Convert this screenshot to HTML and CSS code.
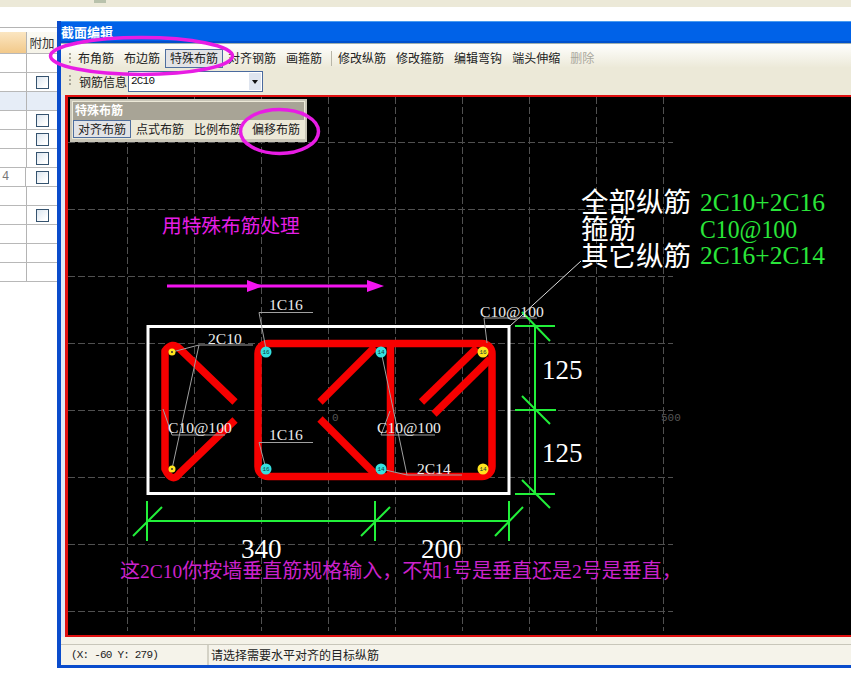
FILE: index.html
```html
<!DOCTYPE html>
<html lang="zh-CN">
<head>
<meta charset="utf-8">
<title>截面编辑</title>
<link rel="stylesheet" href="styles.css">
</head>
<body>
<div class="page">
  <div class="strip"><span class="strip-mark"></span></div>
  <div class="gap"></div>
  <div class="main">
    <div class="sheet">
      <div class="sheet-top"></div>
      <div class="row head"><div class="c1 orange"></div><div class="c2">附加</div></div>
      <div class="row"><div class="c1"></div><div class="c2"></div></div>
      <div class="row"><div class="c1"></div><div class="c2"><i class="cb"></i></div></div>
      <div class="row sel"><div class="c1"></div><div class="c2"></div></div>
      <div class="row"><div class="c1"></div><div class="c2"><i class="cb"></i></div></div>
      <div class="row"><div class="c1"></div><div class="c2"><i class="cb"></i></div></div>
      <div class="row"><div class="c1"></div><div class="c2"><i class="cb"></i></div></div>
      <div class="row"><div class="c1 num">4</div><div class="c2"><i class="cb"></i></div></div>
      <div class="row"><div class="c1"></div><div class="c2"></div></div>
      <div class="row"><div class="c1"></div><div class="c2"><i class="cb"></i></div></div>
      <div class="row"><div class="c1"></div><div class="c2"></div></div>
      <div class="row"><div class="c1"></div><div class="c2"></div></div>
      <div class="row"><div class="c1"></div><div class="c2"></div></div>
    </div>
    <div class="window">
      <div class="titlebar">截面编辑</div>
      <div class="tool tool1">
        <span class="grip"></span>
        <span class="btn">布角筋</span>
        <span class="btn">布边筋</span>
        <span class="btn on">特殊布筋</span>
        <span class="btn">对齐钢筋</span>
        <span class="btn">画箍筋</span>
        <span class="sep"></span>
        <span class="btn">修改纵筋</span>
        <span class="btn">修改箍筋</span>
        <span class="btn">编辑弯钩</span>
        <span class="btn">端头伸缩</span>
        <span class="btn off">删除</span>
      </div>
      <div class="tool tool2">
        <span class="grip"></span>
        <span class="btn lbl">钢筋信息</span>
        <div class="combo"><span class="combo-val">2C10</span><span class="combo-arrow"><i></i></span></div>
      </div>
      <div class="stage">
        <div class="canvas">
          <svg class="draw" width="783" height="538" viewBox="68 98 783 538" xmlns="http://www.w3.org/2000/svg">
            <g class="grid">
              <line x1="127.5" y1="98" x2="127.5" y2="632"/><line x1="194.5" y1="98" x2="194.5" y2="632"/>
              <line x1="261.5" y1="98" x2="261.5" y2="632"/><line x1="328.5" y1="98" x2="328.5" y2="632"/>
              <line x1="395.5" y1="98" x2="395.5" y2="632"/><line x1="462.5" y1="98" x2="462.5" y2="632"/>
              <line x1="529.5" y1="98" x2="529.5" y2="632"/><line x1="596.5" y1="98" x2="596.5" y2="632"/>
              <line x1="663.5" y1="98" x2="663.5" y2="632"/>
              <line x1="68" y1="143.5" x2="673" y2="143.5"/><line x1="68" y1="210.5" x2="673" y2="210.5"/>
              <line x1="68" y1="277.5" x2="673" y2="277.5"/><line x1="68" y1="344.5" x2="673" y2="344.5"/>
              <line x1="68" y1="411.5" x2="673" y2="411.5"/><line x1="68" y1="478.5" x2="673" y2="478.5"/>
              <line x1="68" y1="545.5" x2="673" y2="545.5"/><line x1="68" y1="612.5" x2="673" y2="612.5"/>
            </g>
            <text class="tick" x="661" y="422">500</text>
            <text class="tick" x="332" y="422">0</text>

            <rect class="outline" x="148" y="327.5" width="361" height="167"/>

            <g class="rebar-line">
              <path d="M235 403 L180 350 Q172 342 165 352 L165 470 Q172 485 180 474 L235 421"/>
              <rect x="258" y="344.5" width="234" height="133" rx="10"/>
              <line x1="390.5" y1="344" x2="390.5" y2="478"/>
              <line x1="320" y1="403" x2="375" y2="348"/>
              <line x1="320" y1="420" x2="375" y2="475"/>
              <line x1="421.5" y1="403" x2="477" y2="349"/>
              <line x1="434" y1="415" x2="490" y2="360"/>
            </g>

            <g class="leader">
              <polyline points="313,313.5 259,313.5 266,350"/>
              <polyline points="253,346 199,346 172,353"/>
              <line x1="199" y1="346" x2="172" y2="470"/>
              <polyline points="225,436 172,436 163,410"/>
              <polyline points="313,443.5 259,443.5 266,470"/>
              <polyline points="435,436 381,436 390,412"/>
              <polyline points="462,476 407,476 381,352"/>
              <line x1="407" y1="476" x2="381" y2="470"/>
              <polyline points="537,319 484,319 487,344"/>
            </g>
            <line class="thin" x1="510" y1="327" x2="581" y2="262"/>

            <circle class="cy" cx="266" cy="353" r="5.5"/><circle class="cy" cx="266" cy="470" r="5.5"/>
            <circle class="cy" cx="381" cy="353" r="5.5"/><circle class="cy" cx="381" cy="470" r="5.5"/>
            <circle class="ye" cx="483" cy="353" r="5.5"/><circle class="ye" cx="483" cy="470" r="5.5"/>
            <circle class="ye" cx="172" cy="353" r="3.5"/><circle class="ye" cx="172" cy="470" r="3.5"/>
            <circle class="dot" cx="172" cy="353" r="1"/><circle class="dot" cx="172" cy="470" r="1"/>
            <text class="mark" x="266" y="355">16</text><text class="mark" x="266" y="472">16</text>
            <text class="mark" x="381" y="355">14</text><text class="mark" x="381" y="472">14</text>
            <text class="mark" x="483" y="355">16</text><text class="mark" x="483" y="472">14</text>

            <g class="dim">
              <line x1="535" y1="327" x2="535" y2="495"/>
              <line x1="515" y1="327" x2="555" y2="327"/><line x1="522" y1="313" x2="550" y2="342"/>
              <line x1="515" y1="411" x2="556" y2="411"/><line x1="522" y1="397" x2="550" y2="425"/>
              <line x1="515" y1="495" x2="555" y2="495"/><line x1="522" y1="481" x2="550" y2="509"/>
              <line x1="147" y1="522" x2="510" y2="522"/>
              <line x1="147" y1="502" x2="147" y2="542"/><line x1="133" y1="537" x2="162" y2="508"/>
              <line x1="375" y1="502" x2="375" y2="542"/><line x1="361" y1="537" x2="390" y2="508"/>
              <line x1="509" y1="502" x2="509" y2="542"/><line x1="495" y1="537" x2="523" y2="508"/>
            </g>

            <text class="label" x="269" y="311">1C16</text>
            <text class="label" x="208" y="345">2C10</text>
            <text class="label" x="168" y="434">C10@100</text>
            <text class="label" x="269" y="441">1C16</text>
            <text class="label" x="377" y="434">C10@100</text>
            <text class="label" x="417" y="475">2C14</text>
            <text class="label" x="480" y="318">C10@100</text>

            <text class="size" x="542" y="380">125</text>
            <text class="size" x="542" y="463">125</text>
            <text class="size" x="241" y="559">340</text>
            <text class="size" x="421" y="559">200</text>

            <text class="big" x="581" y="213">全部纵筋</text>
            <text class="big" x="581" y="240">箍筋</text>
            <text class="big" x="581" y="267">其它纵筋</text>
            <text class="spec" x="700" y="212">2C10+2C16</text>
            <text class="spec" x="700" y="239" textLength="97" lengthAdjust="spacingAndGlyphs">C10@100</text>
            <text class="spec" x="700" y="265">2C16+2C14</text>

            <text class="note" x="162" y="234">用特殊布筋处理</text>
            <line class="arrow" x1="167" y1="287" x2="370" y2="287"/>
            <polygon class="arrow-head" points="247,281 263,287 247,293"/>
            <polygon class="arrow-head" points="367,281 384,287 367,293"/>

            <text class="remark" x="120" y="579">这<tspan class="latin">2C10</tspan>你按墙垂直筋规格输入，不知<tspan class="latin">1</tspan>号是垂直还是<tspan class="latin">2</tspan>号是垂直，</text>
          </svg>
          <div class="palette">
            <div class="pal-title">特殊布筋</div>
            <div class="pal-body">
              <span class="btn on">对齐布筋</span>
              <span class="btn">点式布筋</span>
              <span class="btn">比例布筋</span>
              <span class="btn">偏移布筋</span>
            </div>
          </div>
        </div>
      </div>
      <div class="status">
        <div class="st-a">(X: -60 Y: 279)</div>
        <div class="st-b">请选择需要水平对齐的目标纵筋</div>
      </div>
    </div>
  </div>
  <svg class="marks" width="851" height="698" viewBox="0 0 851 698" xmlns="http://www.w3.org/2000/svg">
    <ellipse cx="141.5" cy="56" rx="91" ry="18.5"/>
    <ellipse cx="279.5" cy="131.5" rx="39" ry="22"/>
  </svg>
</div>
</body>
</html>
```
FILE: styles.css
```css
html, body { margin: 0; padding: 0; background: #fff; }
body { font-family: "Noto Sans CJK SC", "Liberation Sans", sans-serif; font-size: 12px; color: #222; }
.page { position: relative; width: 851px; height: 698px; overflow: hidden; }

.strip { height: 7px; background: #ece9d8; overflow: hidden; padding-left: 94px; box-sizing: border-box; }
.strip-mark { display: block; width: 12px; height: 3px; background: #b9c2ac; }
.gap { height: 14px; }
.main { display: flex; height: 647px; }

/* left sheet */
.sheet { width: 57px; flex: none; padding-top: 6px; }
.sheet-top { height: 5px; border-top: 1px solid #b4b4b4; box-sizing: border-box; }
.row { display: flex; height: 19px; box-sizing: border-box; border-bottom: 1px solid #b8b8b8; }
.row.head { height: 22px; }
.c1 { width: 26px; border-right: 1px solid #b4b4b4; flex: none; }
.c2 { flex: 1; display: flex; align-items: center; justify-content: center; font-size: 12.5px; line-height: 20px; color: #333; }
.row.head .c2 { background: linear-gradient(#fbfaf4, #f5f3e8); }
.orange { background: linear-gradient(#fbe6c2, #f2c98a); }
.row.sel { background: #e6edf7; }
.num { color: #777; font: 12px/18px "Liberation Mono", monospace; padding-left: 2px; box-sizing: border-box; }
.cb { display: block; width: 13px; height: 13px; box-sizing: border-box; border: 1.5px solid #35536f; background: linear-gradient(135deg, #dbe5ef, #ffffff 80%); margin: 1px 0 0 1px; }

/* window */
.window { flex: 1; display: flex; flex-direction: column; min-width: 0; border-left: 4px solid #0a4ccc; border-bottom: 3px solid #0a4ccc; background: #f4f2e8; }
.titlebar { height: 22px; flex: none; box-sizing: border-box; border-top: 1px solid #4a9cf0; border-bottom: 2px solid #0050cc; background: #0062e8; color: #fff; font-weight: 700; font-size: 13px; line-height: 20px; white-space: nowrap; }
.tool { display: flex; align-items: center; padding-left: 8px; flex: none; box-sizing: border-box; height: 26px; }
.tool1 { border-top: 1px solid #9fb0ae; padding-top: 3px; background: linear-gradient(#fdfdfa 8%, #ece9d8 95%); }
.tool2 { background: #ece9d8; align-items: flex-start; padding-top: 2px; }
.grip { width: 4px; height: 11px; flex: none; background: repeating-linear-gradient(#a8a698 0 2px, transparent 2px 4px); background-size: 2px 100%; background-repeat: no-repeat; background-position: 0 0; }
.tool2 .grip { margin-top: 4px; }
.btn { display: block; flex: none; box-sizing: border-box; padding: 0 5px; height: 19px; line-height: 18px; white-space: nowrap; }
.btn.on { padding: 0 4px; border: 1px solid #4f6f9f; background: #e2e3e6; line-height: 16px; }
.btn.off { color: #a9a79c; }
.lbl { padding: 0 1px 0 6px; line-height: 21px; height: 21px; }
.sep { width: 1px; height: 15px; background: #b8b6a8; margin: 0 1px 0 4px; flex: none; }
.combo { width: 135px; height: 21px; box-sizing: border-box; border: 1px solid #4a6a9e; background: #fff; display: flex; justify-content: space-between; padding: 1px; flex: none; }
.combo-val { font: 11px/17px "Liberation Mono", monospace; letter-spacing: -0.8px; color: #111; padding-left: 1px; }
.combo-arrow { width: 12px; background: #dfe5ef; display: flex; align-items: center; justify-content: center; }
.combo-arrow i { display: block; width: 0; height: 0; border: 3.5px solid transparent; border-top: 4px solid #111; border-bottom: 0; }

.stage { flex: none; height: 542px; padding-left: 4px; background: #dfe8f5; }
.canvas { position: relative; height: 542px; box-sizing: border-box; border: solid #e01010; border-width: 2px 0 2px 3px; background: #000; overflow: hidden; }
.draw { display: block; }

.palette { position: absolute; left: 2px; top: 2px; width: 237px; height: 43px; box-sizing: border-box; background: #ece9d8; border: 2px solid #c9c6b8; border-bottom-width: 3px; }
.pal-title { height: 18px; margin: 1px 1px 0; background: #a8a496; color: #fff; font-weight: 700; font-size: 12px; line-height: 16px; padding-left: 2px; }
.pal-body { display: flex; padding-left: 1px; }
.pal-body .btn { height: 18px; line-height: 18px; }
.pal-body .btn.on { line-height: 16px; }

.status { flex: 1; box-sizing: border-box; margin-top: 7px; border-top: 1px solid #c8c6ba; display: flex; background: #f5f3ea; }
.st-a { width: 148px; box-sizing: border-box; padding: 1px 0 0 10px; font: 11px/18px "Liberation Mono", monospace; letter-spacing: -0.8px; color: #222; border-right: 2px solid #d4d2c6; flex: none; }
.st-b { padding-left: 2px; line-height: 19px; }

/* drawing */
.grid line { stroke: #505050; stroke-width: 1; stroke-dasharray: 7 3; }
.tick { fill: #555; font: 11px "Liberation Mono", monospace; }
.outline { fill: none; stroke: #fff; stroke-width: 3; }
.rebar-line path, .rebar-line rect, .rebar-line line { fill: none; stroke: #f60000; stroke-width: 7.5; stroke-linejoin: round; }
.leader polyline, .leader line { fill: none; stroke: #a0a0a0; stroke-width: 1; }
.thin { stroke: #ddd; stroke-width: 1; }
.cy { fill: #35e0e0; }
.ye { fill: #ffe41e; }
.dot { fill: #333; }
.mark { fill: #0a3a3a; font: 6px "Liberation Mono", monospace; text-anchor: middle; }
.dim line { stroke: #22f03a; stroke-width: 2; }
.label { fill: #ececec; font: 15.6px "Liberation Serif", serif; }
.size { fill: #fff; font: 27px "Liberation Serif", serif; }
.big { fill: #fff; font: 27.5px "Noto Sans CJK SC", sans-serif; }
.spec { fill: #2ae63a; font: 25.5px "Liberation Serif", serif; }
.note { fill: #e61ee6; font: 19.7px "Noto Sans CJK SC", sans-serif; }
.arrow { stroke: #f414f0; stroke-width: 3; }
.arrow-head { fill: #f414f0; }
.remark { fill: #cc22cc; font: 20px "Noto Sans CJK SC", sans-serif; }
.latin { font: 19.5px "Liberation Serif", serif; }

.marks { position: absolute; left: 0; top: 0; pointer-events: none; }
.marks ellipse { fill: none; stroke: #e81ce4; stroke-width: 3.5; }
```
